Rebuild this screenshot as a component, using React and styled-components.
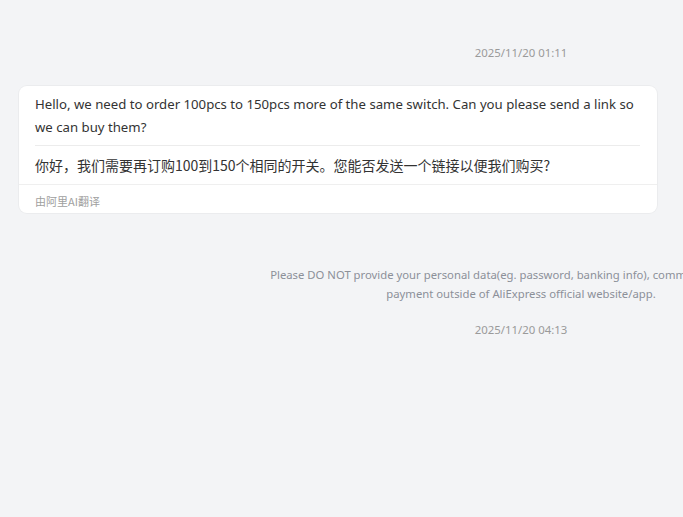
import React from "react";
import styled, { createGlobalStyle } from "styled-components";

const GlobalStyle = createGlobalStyle`
  html, body {
    margin: 0;
    padding: 0;
    background: #f3f4f6;
    overflow: hidden;
  }
  body {
    font-family: "Noto Sans", "Noto Sans CJK SC", sans-serif;
  }
`;

const ChatPanel = styled.div`
  width: 1042px;
  min-height: 517px;
  padding-top: 44px;
  display: flex;
  flex-direction: column;
`;

const TimeStamp = styled.div`
  text-align: center;
  font-size: 11.4px;
  line-height: 18px;
  color: #9a9a9a;
  margin-top: ${props => props.top || 0}px;
  margin-bottom: ${props => props.gap || 0}px;
`;

const Bubble = styled.div`
  width: 638px;
  margin-left: 19px;
  background: #ffffff;
  border-radius: 8px;
  box-shadow: 0 0 0 1px rgba(0, 0, 0, 0.03);
  box-sizing: border-box;
`;

const BubbleBody = styled.div`
  padding: 7px 17px 7px 16px;
`;

const Original = styled.div`
  font-size: 13.2px;
  line-height: 23px;
  color: #333;
  padding-bottom: 6px;
  border-bottom: 1px solid #ececec;
`;

const Translated = styled.div`
  font-size: 14px;
  line-height: 23px;
  color: #333;
  padding-top: 8px;
  font-family: "Noto Sans CJK SC", sans-serif;
`;

const BubbleFooter = styled.div`
  border-top: 1px solid #efefef;
  padding: 8px 16px 4px;
  font-size: 11px;
  line-height: 16px;
  color: #a0a0a0;
  font-family: "Noto Sans CJK SC", sans-serif;
`;

const Notice = styled.div`
  align-self: center;
  max-width: 515px;
  margin-top: 52px;
  text-align: center;
  font-size: 11.3px;
  line-height: 19px;
  color: #8c9099;
`;

export default function App() {
  return (
    <>
      <GlobalStyle />
      <ChatPanel>
        <TimeStamp gap={24}>2025/11/20 01:11</TimeStamp>
        <Bubble>
          <BubbleBody>
            <Original>
              Hello, we need to order 100pcs to 150pcs more of the same switch. Can you please send a
              link so we can buy them?
            </Original>
            <Translated>你好，我们需要再订购100到150个相同的开关。您能否发送一个链接以便我们购买?</Translated>
          </BubbleBody>
          <BubbleFooter>由阿里AI翻译</BubbleFooter>
        </Bubble>
        <Notice>
          Please DO NOT provide your personal data(eg. password, banking info), communicate or make
          payment outside of AliExpress official website/app.
        </Notice>
        <TimeStamp top={18}>2025/11/20 04:13</TimeStamp>
      </ChatPanel>
    </>
  );
}
